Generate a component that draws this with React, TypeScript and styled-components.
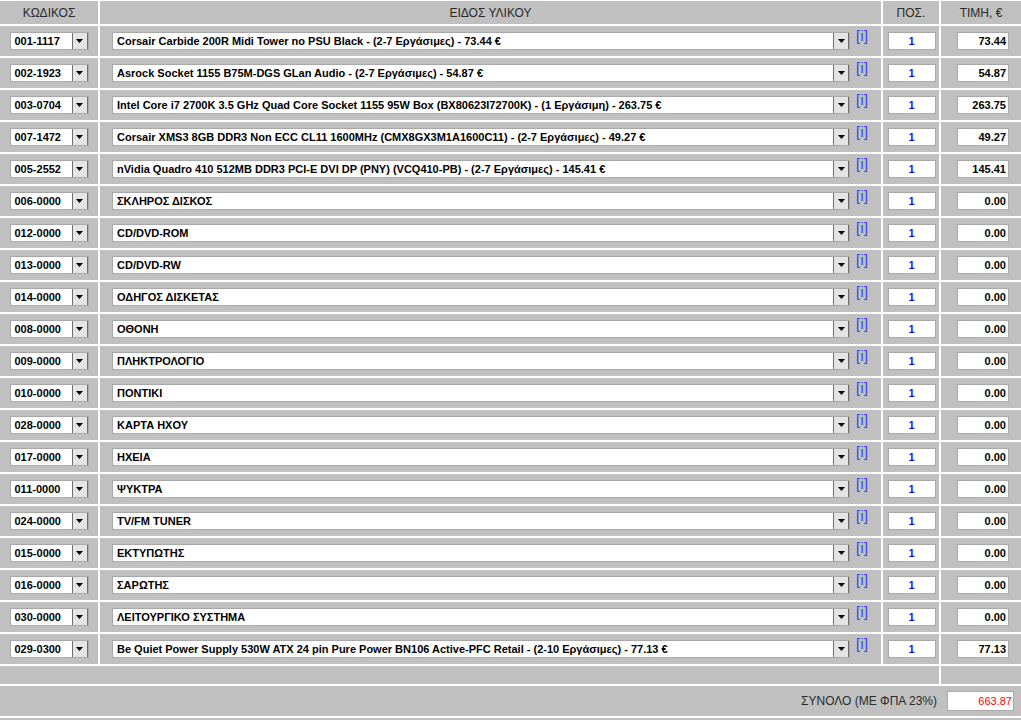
import React from 'react';
import styled, { createGlobalStyle } from 'styled-components';

const GlobalStyle = createGlobalStyle`
  html, body {
    margin: 0;
    padding: 0;
    background: #fff;
    overflow: hidden;
  }
  body {
    font-family: "Liberation Sans", Arial, sans-serif;
  }
`;

const COLS = '98px 781px 56px 80px';

const Sheet = styled.div`
  display: flex;
  flex-direction: column;
  gap: 2px;
  padding-top: 1px;
  background: #fff;
  width: 1021px;
`;

interface RowProps {
  h: number;
}
const Row = styled.div<RowProps>`
  display: grid;
  grid-template-columns: ${COLS};
  column-gap: 2px;
  height: ${({ h }) => h}px;
`;

const HeadCell = styled.div`
  background: #c0c0c0;
  display: flex;
  align-items: center;
  justify-content: center;
  font-size: 12px;
  color: #2a2a2a;
  padding-top: 1px;
`;

const Cell = styled.div`
  background: #c0c0c0;
  display: flex;
  align-items: center;
`;

const CodeCell = styled(Cell)`
  justify-content: center;
`;

const DescCell = styled(Cell)`
  padding-left: 12px;
`;

const QtyCell = styled(Cell)`
  justify-content: center;
  padding-left: 1px;
`;

const PriceCell = styled(Cell)`
  padding-left: 16px;
`;

interface SelectProps {
  w: number;
}
const SelectBox = styled.div<SelectProps>`
  position: relative;
  width: ${({ w }) => w}px;
  height: 18px;
  box-sizing: border-box;
  background: #fff;
  border: 1px solid #a9a9a9;
  font-size: 11px;
  font-weight: bold;
  color: #000;
  display: flex;
  align-items: center;
  padding-left: 4px;
  white-space: nowrap;
  overflow: hidden;
`;

const DropButton = styled.span`
  position: absolute;
  right: 0;
  top: -1px;
  width: 16px;
  height: 18px;
  box-sizing: border-box;
  border: 1px solid #6f6f6f;
  background: #e4e4e4;
  display: flex;
  align-items: center;
  justify-content: center;
`;

const InfoLink = styled.a`
  align-self: flex-start;
  margin-top: 3px;
  margin-left: 6px;
  font-size: 14px;
  letter-spacing: 0.5px;
  color: #3a3aff;
  text-decoration: none;
  line-height: 14px;
`;

interface FieldProps {
  w: number;
  align: 'center' | 'right';
  color: string;
  bold?: boolean;
}
const Field = styled.div<FieldProps>`
  width: ${({ w }) => w}px;
  height: 18px;
  box-sizing: border-box;
  background: #fff;
  border: 1px solid #a9a9a9;
  font-size: 11px;
  font-weight: ${({ bold = true }) => (bold ? 'bold' : 'normal')};
  color: ${({ color }) => color};
  display: flex;
  align-items: center;
  justify-content: ${({ align }) => (align === 'center' ? 'center' : 'flex-end')};
  padding: 0 2px;
`;

const Blank = styled.div`
  background: #c0c0c0;
`;

const WideBlank = styled(Blank)`
  grid-column: 1 / 4;
`;

const TotalCell = styled.div`
  grid-column: 1 / 5;
  background: #c0c0c0;
  display: flex;
  align-items: center;
  justify-content: flex-end;
  gap: 10px;
  padding-right: 7px;
  font-size: 12px;
  color: #2a2a2a;
`;

const TotalField = styled(Field)`
  height: 20px;
  padding-right: 1px;
`;

const Arrow = () => (
  <svg width="7" height="4" viewBox="0 0 7 4">
    <path d="M0 0H7L3.5 4Z" fill="#000" />
  </svg>
);

const FakeSelect = ({ w, text }: { w: number; text: string }) => (
  <SelectBox w={w}>
    {text}
    <DropButton>
      <Arrow />
    </DropButton>
  </SelectBox>
);

const items: [string, string, string][] = [
  ['001-1117', 'Corsair Carbide 200R Midi Tower no PSU Black - (2-7 Εργάσιμες) - 73.44 €', '73.44'],
  ['002-1923', 'Asrock Socket 1155 B75M-DGS GLan Audio - (2-7 Εργάσιμες) - 54.87 €', '54.87'],
  ['003-0704', 'Intel Core i7 2700K 3.5 GHz Quad Core Socket 1155 95W Box (BX80623I72700K) - (1 Εργάσιμη) - 263.75 €', '263.75'],
  ['007-1472', 'Corsair XMS3 8GB DDR3 Non ECC CL11 1600MHz (CMX8GX3M1A1600C11) - (2-7 Εργάσιμες) - 49.27 €', '49.27'],
  ['005-2552', 'nVidia Quadro 410 512MB DDR3 PCI-E DVI DP (PNY) (VCQ410-PB) - (2-7 Εργάσιμες) - 145.41 €', '145.41'],
  ['006-0000', 'ΣΚΛΗΡΟΣ ΔΙΣΚΟΣ', '0.00'],
  ['012-0000', 'CD/DVD-ROM', '0.00'],
  ['013-0000', 'CD/DVD-RW', '0.00'],
  ['014-0000', 'ΟΔΗΓΟΣ ΔΙΣΚΕΤΑΣ', '0.00'],
  ['008-0000', 'ΟΘΟΝΗ', '0.00'],
  ['009-0000', 'ΠΛΗΚΤΡΟΛΟΓΙΟ', '0.00'],
  ['010-0000', 'ΠΟΝΤΙΚΙ', '0.00'],
  ['028-0000', 'ΚΑΡΤΑ ΗΧΟΥ', '0.00'],
  ['017-0000', 'ΗΧΕΙΑ', '0.00'],
  ['011-0000', 'ΨΥΚΤΡΑ', '0.00'],
  ['024-0000', 'TV/FM TUNER', '0.00'],
  ['015-0000', 'ΕΚΤΥΠΩΤΗΣ', '0.00'],
  ['016-0000', 'ΣΑΡΩΤΗΣ', '0.00'],
  ['030-0000', 'ΛΕΙΤΟΥΡΓΙΚΟ ΣΥΣΤΗΜΑ', '0.00'],
  ['029-0300', 'Be Quiet Power Supply 530W ATX 24 pin Pure Power BN106 Active-PFC Retail - (2-10 Εργάσιμες) - 77.13 €', '77.13']
];

export default function App() {
  const total = items.reduce((sum, [, , price]) => sum + Number(price), 0).toFixed(2);

  const rowEls = items.map(([code, desc, price]) => (
    <Row h={30} key={code}>
      <CodeCell>
        <FakeSelect w={79} text={code} />
      </CodeCell>
      <DescCell>
        <FakeSelect w={738} text={desc} />
        <InfoLink href="#">[i]</InfoLink>
      </DescCell>
      <QtyCell>
        <Field w={48} align="center" color="#1414ff">1</Field>
      </QtyCell>
      <PriceCell>
        <Field w={52} align="right" color="#000">{price}</Field>
      </PriceCell>
    </Row>
  ));

  return (
    <>
      <GlobalStyle />
      <Sheet>
        <Row h={23}>
          <HeadCell>ΚΩΔΙΚΟΣ</HeadCell>
          <HeadCell>ΕΙΔΟΣ ΥΛΙΚΟΥ</HeadCell>
          <HeadCell>ΠΟΣ.</HeadCell>
          <HeadCell>ΤΙΜΗ, €</HeadCell>
        </Row>
        {rowEls}
        <Row h={18}>
          <WideBlank />
          <Blank />
        </Row>
        <Row h={30}>
          <TotalCell>
            ΣΥΝΟΛΟ (ΜΕ ΦΠΑ 23%)
            <TotalField w={67} align="right" color="#ff0000" bold={false}>{total}</TotalField>
          </TotalCell>
        </Row>
        <Row h={30}>
          <TotalCell />
        </Row>
      </Sheet>
    </>
  );
}
